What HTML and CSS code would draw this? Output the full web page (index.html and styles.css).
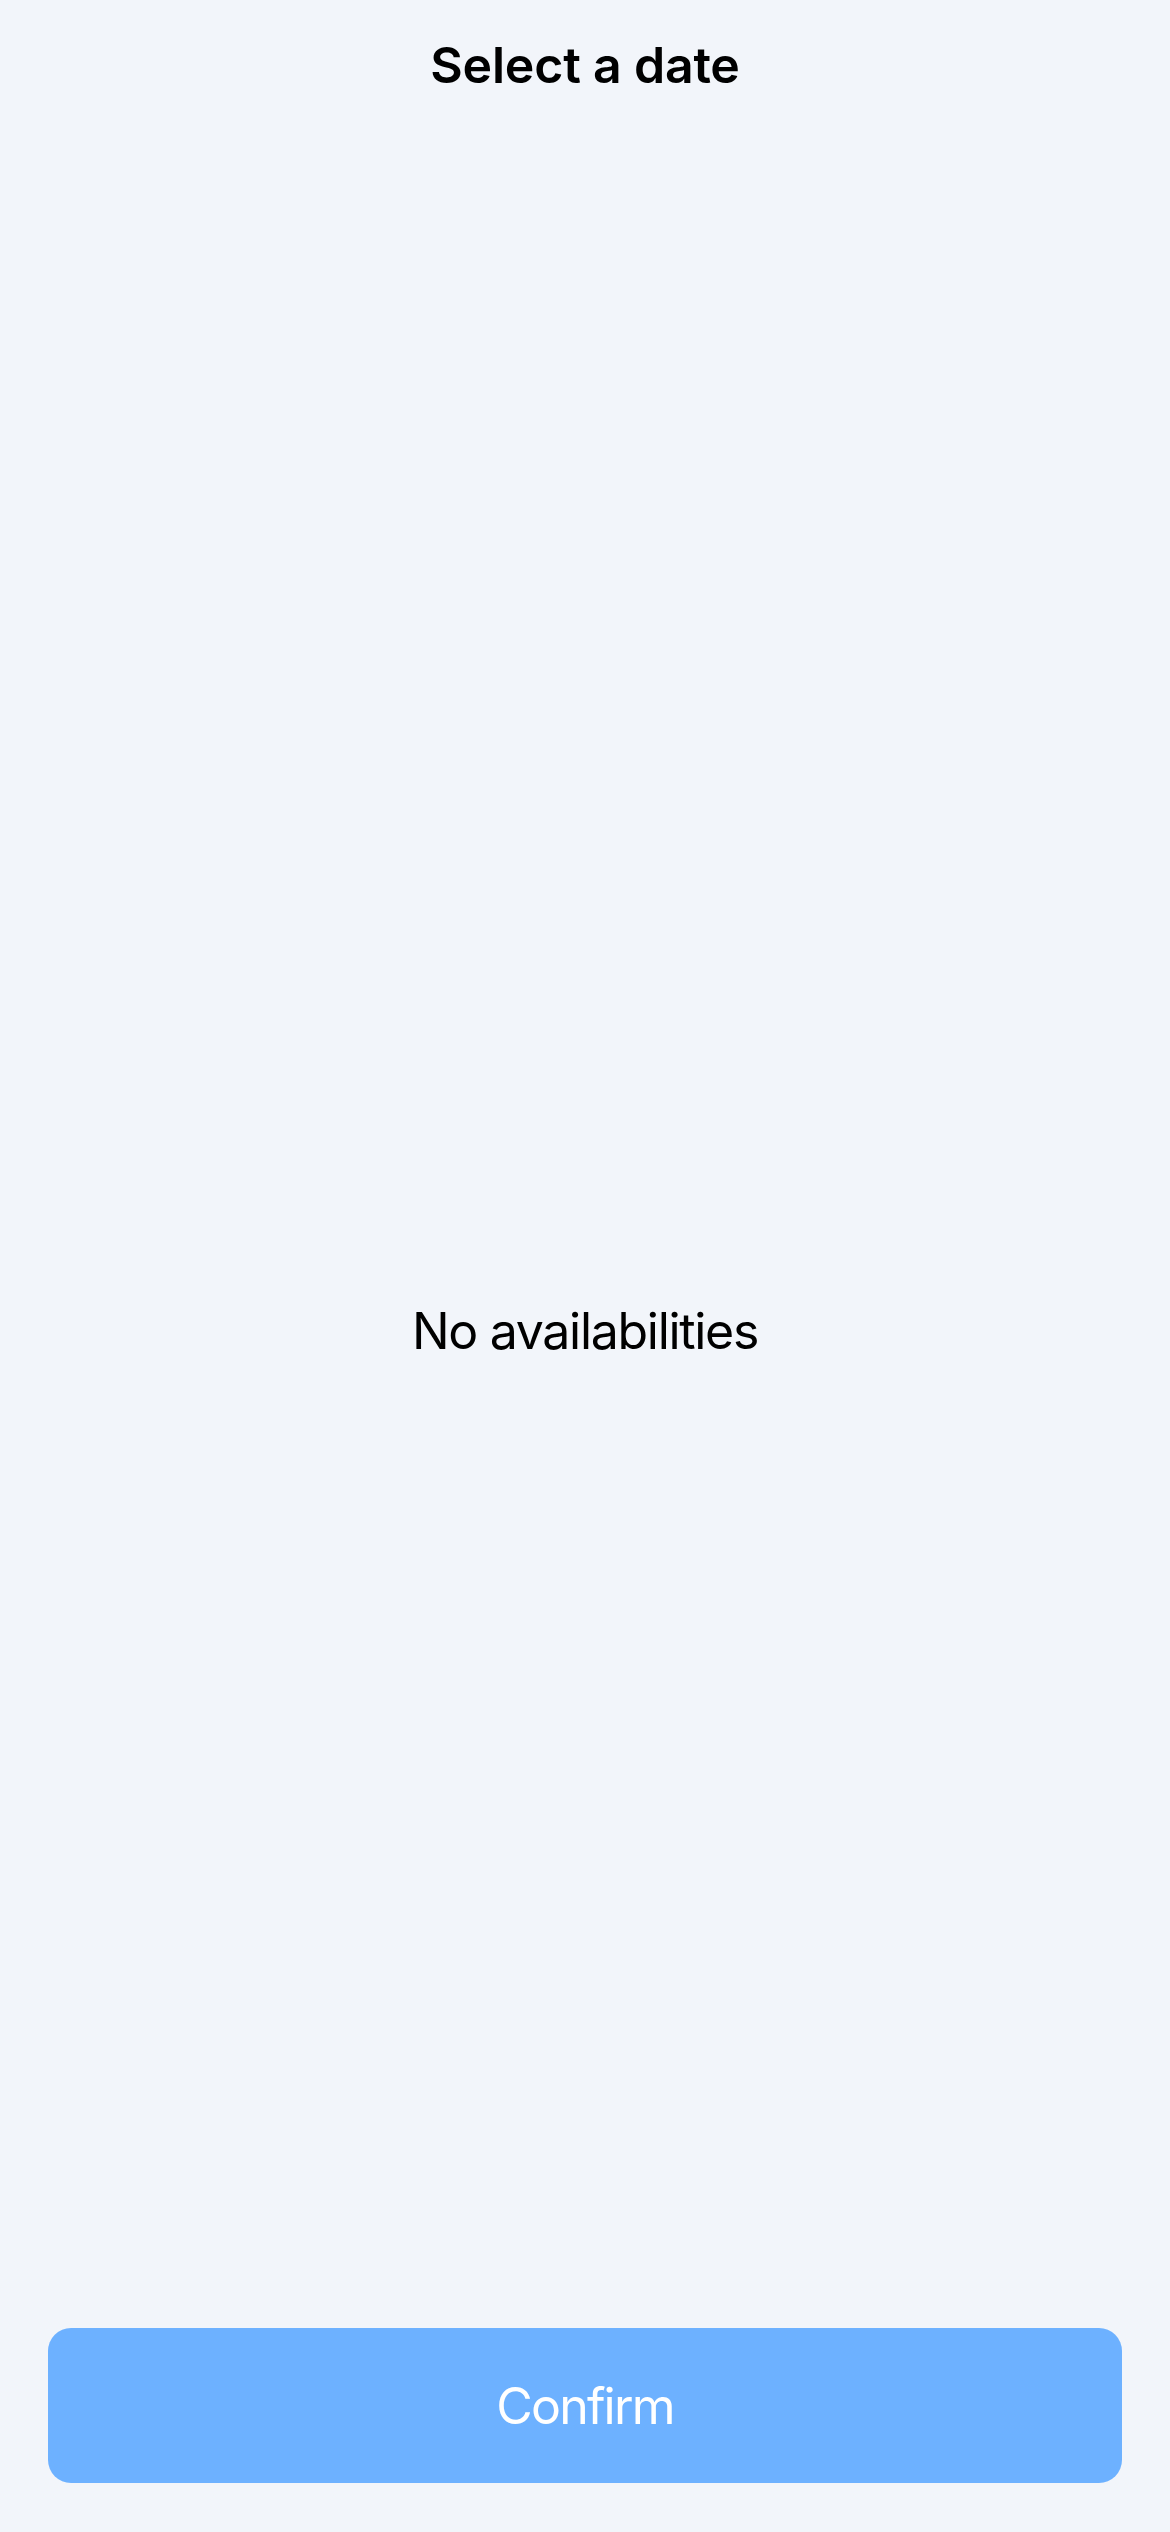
FILE: index.html
```html
<!DOCTYPE html>
<html lang="en">
<head>
<meta charset="utf-8">
<title>Select a date</title>
<link rel="stylesheet" href="styles.css">
</head>
<body>
<div class="screen">
  <header class="header"><h1 class="title">Select a date</h1></header>
  <main class="content"><p class="empty">No availabilities</p></main>
  <footer class="footer"><button class="confirm" type="button">Confirm</button></footer>
</div>
</body>
</html>
```
FILE: styles.css
```css
* { box-sizing: border-box; }
html, body { margin: 0; padding: 0; }
body {
  background: #f2f5fa;
  font-family: Inter, "Noto Sans", "Liberation Sans", sans-serif;
  color: #000;
}
.screen {
  width: 1170px;
  height: 2532px;
  display: grid;
  grid-template-rows: 130px 1fr auto;
  grid-template-columns: 1fr;
}
.header {
  grid-row: 1;
  grid-column: 1;
  display: flex;
  justify-content: center;
  padding-top: 35px;
}
.title {
  margin: 0;
  font-size: 50px;
  line-height: 60px;
  font-weight: 600;
  letter-spacing: -0.2px;
}
.content {
  grid-row: 2 / 4;
  grid-column: 1;
  display: flex;
  align-items: center;
  justify-content: center;
}
.empty {
  margin: 0;
  font-size: 50px;
  line-height: 60px;
  font-weight: 400;
  letter-spacing: -1.3px;
}
.footer {
  grid-row: 3;
  grid-column: 1;
  padding: 0 48px 49px;
  z-index: 1;
}
.confirm {
  display: block;
  width: 100%;
  height: 155px;
  border: 0;
  border-radius: 23px;
  background: #6db1ff;
  color: #fff;
  font-family: inherit;
  font-size: 50px;
  font-weight: 400;
  letter-spacing: -1.8px;
  padding: 0;
}
```
